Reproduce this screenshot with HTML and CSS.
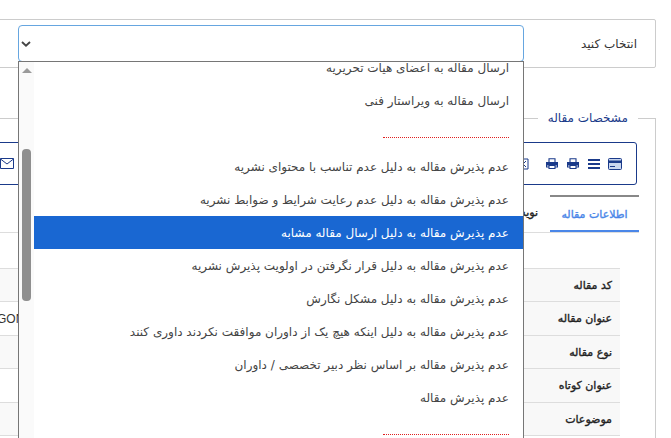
FILE: index.html
```html
<!DOCTYPE html>
<html lang="fa" dir="rtl">
<head>
<meta charset="utf-8">
<title>مشخصات مقاله</title>
<link rel="stylesheet" href="styles.css">
</head>
<body>
<div class="page">
  <section class="panel">
    <div class="panel-label">انتخاب کنید</div>
    <div class="select-box">
      <svg class="chevron" viewBox="0 0 10 6" width="10" height="6"><path d="M1 1l4 3.600L9 1" fill="none" stroke="#444" stroke-width="1.9"/></svg>
    </div>
  </section>

  <fieldset class="details">
    <legend class="details-title">مشخصات مقاله</legend>
    <div class="toolbar">
      <svg class="tool tool-card" viewBox="0 0 14 12" width="14" height="12"><rect x=".5" y=".5" width="13" height="11" rx="1" fill="#c9d6ee" stroke="#1a3a8a"/><rect x="0" y="2.500" width="14" height="2.500" fill="#1a3a8a"/><rect x="2" y="8" width="5" height="1" fill="#1a3a8a"/></svg>
      <svg class="tool" viewBox="0 0 12 10" width="12" height="10"><path d="M0 1h12M0 5h12M0 9h12" stroke="#1a3a8a" stroke-width="1.8"/></svg>
      <svg class="tool" viewBox="0 0 12 11" width="12" height="11"><path d="M3 4V.7h6V4M3 9H.5V4.500h11V9H9M3 7.500h6v3H3z" fill="none" stroke="#1a3a8a" stroke-width="1.100"/><rect x=".5" y="4.500" width="11" height="3" fill="#1a3a8a"/></svg>
      <svg class="tool" viewBox="0 0 12 11" width="12" height="11"><path d="M3 4V.7h6V4M3 9H.5V4.500h11V9H9M3 7.500h6v3H3z" fill="none" stroke="#1a3a8a" stroke-width="1.100"/><rect x=".5" y="4.500" width="11" height="3" fill="#1a3a8a"/></svg>
      <svg class="tool tool-far" viewBox="0 0 12 12" width="12" height="12"><path d="M1 1h10v10H1zM3 3l6 6M9 3l-6 6" fill="none" stroke="#1a3a8a"/></svg>
      <svg class="tool tool-mail" viewBox="0 0 14 11" width="14" height="11"><path d="M.5.5h13v10H.5zM.5 1l6.500 5 6.500-5" fill="none" stroke="#1a3a8a"/></svg>
    </div>
    <div class="tabs">
      <div class="tab tab-active">اطلاعات مقاله</div>
      <div class="tab tab-plain">نویسندگان</div>
    </div>
    <div class="rows">
      <div class="row row-odd"><div class="row-head">کد مقاله</div><div class="row-value"></div></div>
      <div class="row"><div class="row-head">عنوان مقاله</div><div class="row-value">GON</div></div>
      <div class="row row-odd"><div class="row-head">نوع مقاله</div><div class="row-value"></div></div>
      <div class="row"><div class="row-head">عنوان کوتاه</div><div class="row-value"></div></div>
      <div class="row row-odd"><div class="row-head">موضوعات</div><div class="row-value"></div></div>
    </div>
  </fieldset>

  <div class="dropdown">
    <div class="scrollbar">
      <span class="scroll-arrow"></span>
      <span class="scroll-thumb"></span>
    </div>
    <ul class="options">
      <li class="option">ارسال مقاله به اعضای هیات تحریریه</li>
      <li class="option">ارسال مقاله به ویراستار فنی</li>
      <li class="option option-divider"><span class="dots"></span></li>
      <li class="option">عدم پذیرش مقاله به دلیل عدم تناسب با محتوای نشریه</li>
      <li class="option">عدم پذیرش مقاله به دلیل عدم رعایت شرایط و ضوابط نشریه</li>
      <li class="option option-selected">عدم پذیرش مقاله به دلیل ارسال مقاله مشابه</li>
      <li class="option">عدم پذیرش مقاله به دلیل قرار نگرفتن در اولویت پذیرش نشریه</li>
      <li class="option">عدم پذیرش مقاله به دلیل مشکل نگارش</li>
      <li class="option">عدم پذیرش مقاله به دلیل اینکه هیچ یک از داوران موافقت نکردند داوری کنند</li>
      <li class="option">عدم پذیرش مقاله بر اساس نظر دبیر تخصصی / داوران</li>
      <li class="option">عدم پذیرش مقاله</li>
      <li class="option option-divider"><span class="dots"></span></li>
    </ul>
  </div>
</div>
</body>
</html>
```
FILE: styles.css
```css
html, body {
  margin: 0;
  padding: 0;
  background: #fff;
}
.page {
  position: relative;
  width: 671px;
  height: 438px;
  overflow: hidden;
  font-family: "DejaVu Sans", sans-serif;
  font-size: 12px;
  color: #333;
  padding-top: 19px;
  box-sizing: border-box;
}
.panel {
  display: flex;
  align-items: center;
  box-sizing: border-box;
  height: 49px;
  margin: 0 15px 0 -20px;
  border: 1px solid #ccc;
  border-radius: 2px;
}
.panel-label {
  width: 114px;
  padding-right: 18px;
  box-sizing: border-box;
  flex: none;
  margin-left: 17px;
  white-space: nowrap;
  color: #333;
}
.select-box {
  display: flex;
  align-items: center;
  justify-content: flex-end;
  box-sizing: border-box;
  width: 506px;
  height: 37px;
  padding-left: 2px;
  border: 1px solid #66a6e0;
  border-radius: 4px;
}
.details {
  margin: 42px 15px 0 -20px;
  padding: 0 18px 0 36px;
  border: 1px solid #ccc;
  border-bottom: 0;
  min-width: 0;
  height: 340px;
}
.details-title {
  padding: 0 10px;
  margin-right: -1px;
  color: #1a3a8a;
  font-size: 12px;
  line-height: 16px;
}
.toolbar {
  display: flex;
  align-items: center;
  box-sizing: border-box;
  height: 43px;
  margin-top: 16px;
  margin-left: -27px;
  padding: 0 14px 0 0;
  gap: 9px;
  border: 1px solid #1a3a8a;
  border-radius: 3px;
}
.tool {
  flex: none;
}
.tool-card {
  margin-left: -1px;
}
.tool-far {
  margin-right: 8px;
}
.tool-mail {
  margin-right: auto;
  margin-left: 9px;
}
.tabs {
  display: flex;
  height: 37px;
  margin: 10px -2px 0 -27px;
  border-bottom: 1px solid #ddd;
  font-size: 11px;
  -webkit-text-stroke: 0.35px currentColor;
  color: #222;
}
.tab {
  box-sizing: border-box;
  height: 37px;
  line-height: 36px;
  text-align: center;
  white-space: nowrap;
}
.tab-active {
  width: 89px;
  color: #4a86e8;
  border-top: 2px solid #888;
  border-bottom: 2px solid #4a86e8;
}
.tab-plain {
  padding: 0 12px;
}
.rows {
  margin-top: 35px;
  margin-left: -27px;
  margin-right: 17px;
  border-top: 1px solid #ddd;
}
.row {
  display: flex;
  box-sizing: border-box;
  height: 33.4px;
  border-bottom: 1px solid #ddd;
  align-items: center;
}
.row-odd {
  background: #f9f9f9;
}
.row-head {
  box-sizing: border-box;
  width: 98px;
  padding-right: 8px;
  font-size: 11px;
  -webkit-text-stroke: 0.35px currentColor;
  white-space: nowrap;
  color: #222;
  background: #f8f8f8;
  align-self: stretch;
  line-height: 33px;
}
.row-value {
  flex: 1;
  direction: ltr;
  text-align: left;
  padding-left: 7px;
  font-family: "Liberation Sans", sans-serif;
  font-size: 12px;
  color: #333;
}
.chevron {
  display: block;
}
.dropdown {
  position: absolute;
  left: 18px;
  top: 61px;
  width: 506px;
  height: 377px;
  box-sizing: border-box;
  display: flex;
  flex-direction: row-reverse;
  overflow: hidden;
  background: #fff;
  border: 1px solid #767676;
  border-bottom: 0;
  direction: ltr;
}
.scrollbar {
  position: relative;
  flex: none;
  width: 15px;
  background: #fafafa;
  order: 1;
}
.scroll-arrow {
  position: absolute;
  left: 3px;
  top: 6px;
  border: 5px solid transparent;
  border-top: 0;
  border-bottom: 5px solid #9a9a9a;
}
.scroll-thumb {
  position: absolute;
  left: 3px;
  top: 87px;
  width: 9px;
  height: 152px;
  background: #8f8f8f;
  border-radius: 4px;
}
.options {
  flex: 1;
  min-width: 0;
  order: 0;
  direction: rtl;
  list-style: none;
  margin: -11px 0 0;
  padding: 0;
}
.option {
  box-sizing: border-box;
  height: 33px;
  line-height: 35px;
  padding-right: 14px;
  white-space: nowrap;
  color: #444;
}
.option-selected {
  background: #1967d2;
  color: #fff;
}
.option-divider {
  position: relative;
}
.dots {
  display: block;
  width: 126px;
  height: 0;
  position: relative;
  top: 20px;
  border-top: 1px dotted #e02020;
}
```
